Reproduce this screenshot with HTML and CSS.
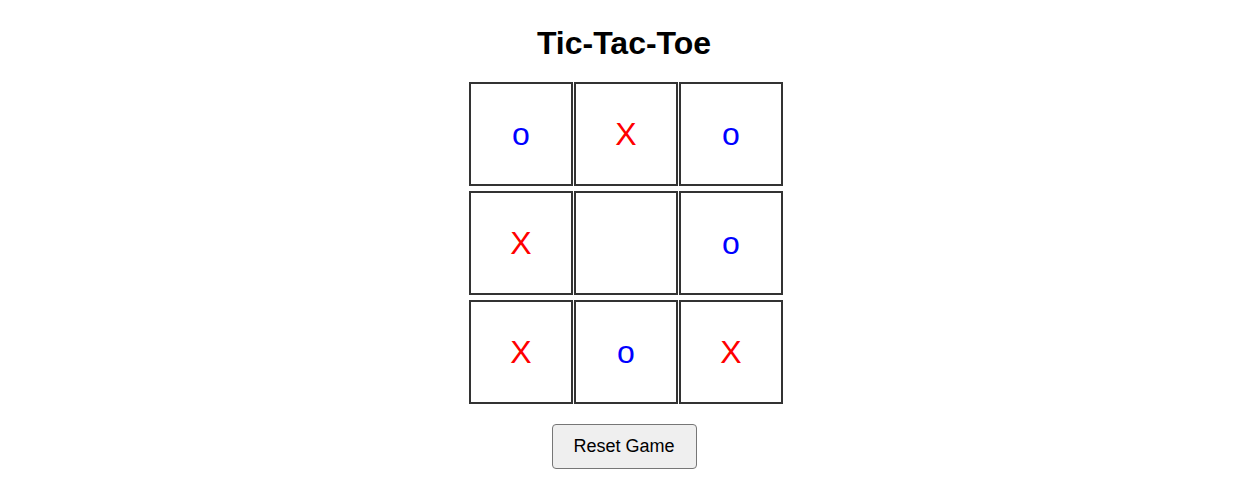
FILE: index.html
```html
<!DOCTYPE html>
<html lang="en">
<head>
<meta charset="utf-8">
<title>Tic-Tac-Toe</title>
<link rel="stylesheet" href="styles.css">
</head>
<body>
<div class="game">
  <h1 class="title">Tic-Tac-Toe</h1>
  <div class="board">
    <div class="cell o">o</div>
    <div class="cell x">X</div>
    <div class="cell o">o</div>
    <div class="cell x">X</div>
    <div class="cell"></div>
    <div class="cell o">o</div>
    <div class="cell x">X</div>
    <div class="cell o">o</div>
    <div class="cell x">X</div>
  </div>
  <button class="reset" type="button">Reset Game</button>
</div>
</body>
</html>
```

FILE: styles.css
```css
body {
  margin: 8px;
  font-family: "Liberation Sans", Arial, sans-serif;
  background: #fff;
  color: #000;
}

.game {
  display: flex;
  flex-direction: column;
  align-items: center;
  padding-right: 1px;
}

.title {
  font-size: 32px;
  line-height: 37px;
  font-weight: bold;
  margin: 17px 0 20px;
}

.board {
  display: grid;
  grid-template-columns: repeat(3, 100px);
  gap: 5px;
}

.cell {
  width: 100px;
  height: 100px;
  border: 2px solid #333;
  display: flex;
  align-items: center;
  justify-content: center;
  font-size: 32px;
  background: #fff;
}

.cell.x { color: #ff0000; }
.cell.o { color: #0000ff; }

.reset {
  margin-top: 20px;
  font-family: "Liberation Sans", Arial, sans-serif;
  font-size: 18px;
  line-height: 21px;
  padding: 10px 20px;
  background: #efefef;
  border: 1px solid #767676;
  border-radius: 4px;
  color: #000;
  width: 145px;
  height: 45px;
}
```
